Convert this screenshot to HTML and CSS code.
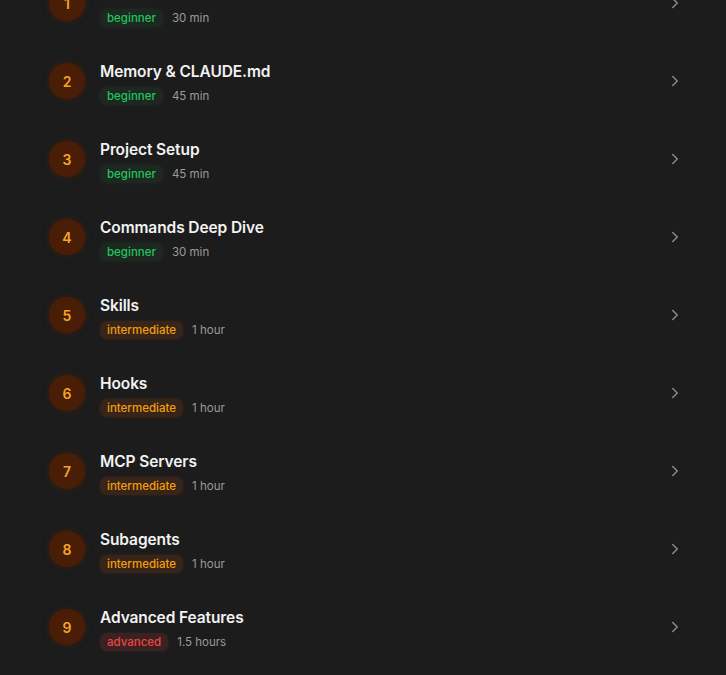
FILE: index.html
```html
<!DOCTYPE html>
<html lang="en">
<head>
<meta charset="utf-8">
<link rel="stylesheet" href="styles.css">
</head>
<body>
<ul class="list">
  <li class="row"><span class="num">1</span><div class="info"><div class="title">Introduction</div><div class="meta"><span class="badge beginner">beginner</span><span class="time">30 min</span></div></div><svg class="chev" viewBox="0 0 24 24"><path d="m9 18 6-6-6-6"/></svg></li>
  <li class="row"><span class="num">2</span><div class="info"><div class="title">Memory &amp; CLAUDE.md</div><div class="meta"><span class="badge beginner">beginner</span><span class="time">45 min</span></div></div><svg class="chev" viewBox="0 0 24 24"><path d="m9 18 6-6-6-6"/></svg></li>
  <li class="row"><span class="num">3</span><div class="info"><div class="title">Project Setup</div><div class="meta"><span class="badge beginner">beginner</span><span class="time">45 min</span></div></div><svg class="chev" viewBox="0 0 24 24"><path d="m9 18 6-6-6-6"/></svg></li>
  <li class="row"><span class="num">4</span><div class="info"><div class="title">Commands Deep Dive</div><div class="meta"><span class="badge beginner">beginner</span><span class="time">30 min</span></div></div><svg class="chev" viewBox="0 0 24 24"><path d="m9 18 6-6-6-6"/></svg></li>
  <li class="row"><span class="num">5</span><div class="info"><div class="title">Skills</div><div class="meta"><span class="badge intermediate">intermediate</span><span class="time">1 hour</span></div></div><svg class="chev" viewBox="0 0 24 24"><path d="m9 18 6-6-6-6"/></svg></li>
  <li class="row"><span class="num">6</span><div class="info"><div class="title">Hooks</div><div class="meta"><span class="badge intermediate">intermediate</span><span class="time">1 hour</span></div></div><svg class="chev" viewBox="0 0 24 24"><path d="m9 18 6-6-6-6"/></svg></li>
  <li class="row"><span class="num">7</span><div class="info"><div class="title">MCP Servers</div><div class="meta"><span class="badge intermediate">intermediate</span><span class="time">1 hour</span></div></div><svg class="chev" viewBox="0 0 24 24"><path d="m9 18 6-6-6-6"/></svg></li>
  <li class="row"><span class="num">8</span><div class="info"><div class="title">Subagents</div><div class="meta"><span class="badge intermediate">intermediate</span><span class="time">1 hour</span></div></div><svg class="chev" viewBox="0 0 24 24"><path d="m9 18 6-6-6-6"/></svg></li>
  <li class="row"><span class="num">9</span><div class="info"><div class="title">Advanced Features</div><div class="meta"><span class="badge advanced">advanced</span><span class="time">1.5 hours</span></div></div><svg class="chev" viewBox="0 0 24 24"><path d="m9 18 6-6-6-6"/></svg></li>
</ul>
</body>
</html>
```

FILE: styles.css
```css
html, body {
  margin: 0;
  padding: 0;
  background: #1c1c1c;
  font-family: Inter, "Noto Sans", sans-serif;
  overflow: hidden;
}
.list {
  list-style: none;
  margin: -36px 0 0 0;
  padding: 0 42px 0 49px;
}
.row {
  display: flex;
  align-items: center;
  height: 78px;
}
.num {
  flex: none;
  width: 36px;
  height: 36px;
  border-radius: 50%;
  background: #4a1e06;
  color: #f5a524;
  font-size: 14px;
  font-weight: 600;
  display: flex;
  align-items: center;
  justify-content: center;
  box-shadow: 0 0 6px rgba(90, 35, 5, 0.5);
}
.info {
  flex: 1;
  margin-left: 15px;
  padding-top: 4px;
  display: flex;
  flex-direction: column;
  gap: 5px;
}
.title {
  color: #f2f2f2;
  font-size: 15.5px;
  font-weight: 600;
  line-height: 20px;
  letter-spacing: -0.1px;
}
.meta {
  display: flex;
  align-items: center;
  gap: 9px;
}
.badge {
  font-size: 11.5px;
  font-weight: 500;
  line-height: 18px;
  padding: 0 7px;
  border-radius: 7px;
}
.beginner {
  color: #22c55e;
  background: rgba(34, 197, 94, 0.08);
  box-shadow: 0 0 4px rgba(34, 197, 94, 0.1);
}
.intermediate {
  color: #f59e0b;
  background: rgba(220, 90, 11, 0.14);
  box-shadow: 0 0 4px rgba(220, 90, 11, 0.12);
}
.advanced {
  color: #ef4444;
  background: rgba(239, 68, 68, 0.14);
  box-shadow: 0 0 4px rgba(239, 68, 68, 0.12);
}
.time {
  color: #9b9b9b;
  font-size: 11.5px;
}
.chev {
  flex: none;
  width: 18px;
  height: 18px;
  fill: none;
  stroke: #8a8a8a;
  stroke-width: 2;
  stroke-linecap: round;
  stroke-linejoin: round;
}
```
